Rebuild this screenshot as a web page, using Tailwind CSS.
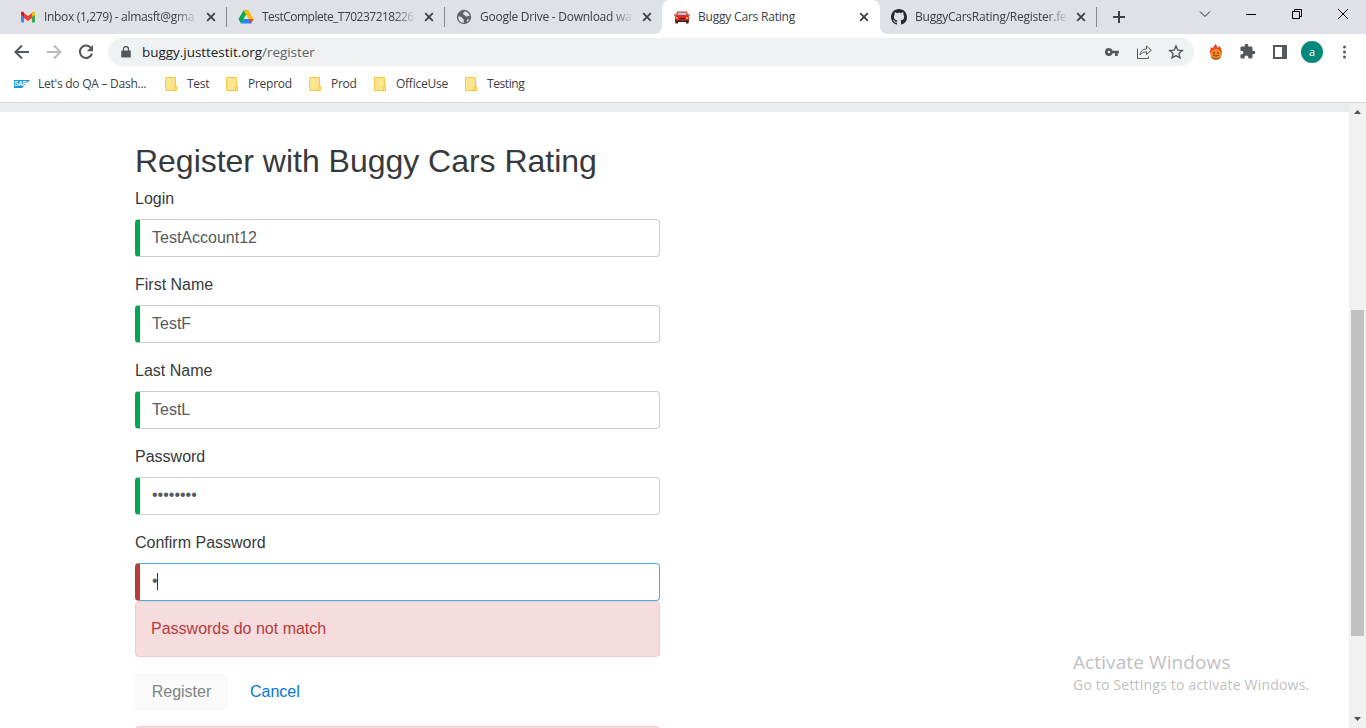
<!DOCTYPE html>
<html lang="en">
<head>
<meta charset="utf-8">
<title>Buggy Cars Rating</title>
<script src="https://cdn.jsdelivr.net/npm/@tailwindcss/browser@4"></script>
</head>
<body class="w-[1366px] h-[728px] overflow-hidden bg-white flex flex-col font-['Open_Sans',sans-serif] text-[12px] text-[#3c4043] relative">
<svg class="hidden">
  <symbol id="x" viewBox="0 0 10 10"><path d="M1.2 1.2 8.8 8.8M8.8 1.2 1.2 8.8" stroke="#3c4043" stroke-width="1.8" fill="none"/></symbol>
  <symbol id="folder" viewBox="0 0 12 14"><path d="M.5.5h10v9h1v4H.5z" fill="#ffe490" stroke="#f7c744"/><path d="M9.5 13v-3.5h2v4h-2z" fill="#ffe490" stroke="#f7c744"/></symbol>
</svg>

<!-- Tab strip -->
<header class="h-[34px] bg-[#dee1e6] flex shrink-0 pl-2 whitespace-nowrap">
  <div class="w-[218px] flex items-center pl-3 shrink-0">
    <svg class="w-4 h-4" viewBox="0 0 16 16"><path d="M1 13V4l3 2v7.500H2z" fill="#4285f4"/><path d="M12 6l3-2v9l-1 .5h-2z" fill="#34a853"/><path d="M4 9V4l4 3 4-3v5l-4 3z" fill="#ea4335"/><path d="M1 4c0-1.600 1.500-2 2.500-1L4 3.500V8L1 6z" fill="#c5221f"/><path d="M15 4c0-1.600-1.500-2-2.500-1l-.5.500V8l3-2z" fill="#fbbc04"/></svg>
    <span class="ml-2 w-[154px] mask-r-from-85% tracking-[-0.33px]">Inbox (1,279) - almasft@gma</span>
    <svg class="w-[10px] h-[10px] ml-[8px]"><use href="#x"/></svg>
    <i class="w-px h-5 bg-[#85888d] ml-auto -mr-px"></i>
  </div>
  <div class="w-[218px] flex items-center pl-3 shrink-0">
    <svg class="w-4 h-4" viewBox="0 0 16 16"><path d="M5.500 1.500h5L8 6 3 14.500.5 10z" fill="#00ac47"/><path d="M5.500 1.500h5l5 8.500h-5z" fill="#ffba00"/><path d="M5.500 10h10L13 14.500H3z" fill="#2684fc"/><path d="M8 6l2.500 4h-5z" fill="#dee1e6"/><path d="M10.500 10h5L13 14.500z" fill="#ea4335"/></svg>
    <span class="ml-2 w-[155px] mask-r-from-85% tracking-[-0.52px]">TestComplete_T70237218226</span>
    <svg class="w-[10px] h-[10px] ml-[7px]"><use href="#x"/></svg>
    <i class="w-px h-5 bg-[#85888d] ml-auto -mr-px"></i>
  </div>
  <div class="w-[218px] flex items-center pl-3 shrink-0">
    <svg class="w-4 h-4" viewBox="0 0 16 16"><circle cx="8" cy="8" r="7.200" fill="#5f6368"/><path d="M2.200 7.500c2 0 3.500.2 4 1.500.4 1 1.600.8 1.600 2v2.800C4.500 13.700 2 11 2.200 7.500zM8.500 2.200c0 1.500-1.500 1-1.500 2.300S8.500 5.500 9 6.500s1.500 1.200 2.500.8 1.500-.6 2.300 0C13.500 4.500 11 2.500 8.500 2.200zM11 10.500c1 0 1.500-.5 2.300-.3-.5 1.300-1.300 2.200-2.300 2.800z" fill="#dee1e6"/></svg>
    <span class="ml-2 w-[154px] mask-r-from-85% tracking-[-0.25px]">Google Drive - Download wa</span>
    <svg class="w-[10px] h-[10px] ml-[8px]"><use href="#x"/></svg>
  </div>
  <div class="w-[218px] bg-white rounded-t-lg flex items-center pl-3 shrink-0 relative">
    <svg class="w-2 h-2 absolute -left-2 bottom-0" viewBox="0 0 8 8"><path d="M8 0v8H0c4.500 0 8-3.500 8-8z" fill="#fff"/></svg>
    <svg class="w-2 h-2 absolute -right-2 bottom-0" viewBox="0 0 8 8"><path d="M0 0v8h8C3.500 8 0 4.500 0 0z" fill="#fff"/></svg>
    <svg class="w-4 h-4" viewBox="0 0 16 16"><path d="M3.200 2.500h9.600l1.500 4h-12.600z" fill="#d3281b"/><path d="M4 3.500h8l1 3H3z" fill="#a9cbe0"/><path d="M0 5.500h2v1H0zM14 5.500h2v1h-2z" fill="#a11"/><path d="M1 7.500 2.500 6h11L15 7.500V12H1z" fill="#e8281c"/><path d="M1 11.500h14V13H1zM1.500 13H4v1.500H1.500zM12 13h2.500v1.500H12zM5 9h6v1.200H5z" fill="#35211f"/><path d="M2 8.300h2v1.200H2zM12 8.300h2v1.200h-2z" fill="#ffd36b"/></svg>
    <span class="ml-2 w-[153px] tracking-[-0.2px]">Buggy Cars Rating</span>
    <svg class="w-[10px] h-[10px] ml-[8px]"><use href="#x"/></svg>
  </div>
  <div class="w-[217px] flex items-center pl-[11px] shrink-0">
    <svg class="w-4 h-4" viewBox="0 0 16 16"><path fill="#24292f" d="M8 0C3.580 0 0 3.580 0 8c0 3.540 2.290 6.530 5.470 7.590.4.070.55-.17.55-.38 0-.19-.01-.82-.01-1.490-2.010.37-2.530-.49-2.690-.94-.09-.23-.48-.94-.82-1.130-.28-.15-.68-.52-.01-.53.63-.01 1.080.58 1.230.82.72 1.210 1.870.87 2.330.66.07-.52.28-.87.51-1.070-1.780-.2-3.640-.89-3.640-3.950 0-.87.31-1.590.82-2.150-.08-.2-.36-1.020.08-2.120 0 0 .67-.21 2.200.82.64-.18 1.320-.27 2-.27s1.360.09 2 .27c1.530-1.040 2.200-.82 2.200-.82.44 1.100.16 1.920.08 2.120.51.56.82 1.270.82 2.150 0 3.070-1.870 3.750-3.650 3.950.29.25.54.73.54 1.480 0 1.070-.01 1.930-.01 2.200 0 .21.15.46.55.38A8.010 8.010 0 0 0 16 8c0-4.420-3.580-8-8-8z"/></svg>
    <span class="ml-2 w-[154px] mask-r-from-85% tracking-[-0.24px]">BuggyCarsRating/Register.fea</span>
    <svg class="w-[10px] h-[10px] ml-[7px]"><use href="#x"/></svg>
    <i class="w-px h-5 bg-[#85888d] ml-auto"></i>
  </div>
  <svg class="w-[14px] h-[14px] ml-[15px] mt-[10px]" viewBox="0 0 14 14"><path d="M7 1v12M1 7h12" stroke="#3c4043" stroke-width="2"/></svg>
  <div class="ml-auto flex pt-[8px] pr-[17px] gap-[35px]">
    <svg class="w-[12px] h-[12px]" viewBox="0 0 12 12"><path d="M1 3.500 6 8.500 11 3.500" stroke="#222" fill="none"/></svg>
    <svg class="w-[10px] h-[12px]" viewBox="0 0 10 12"><path d="M0 6.500h10" stroke="#000"/></svg>
    <svg class="w-[11px] h-[12px] ml-px -mr-px" viewBox="0 0 11 12"><path d="M.5 3.500h7v7h-7zM2.500 3.500v-2h7v7h-2" stroke="#000" fill="none"/></svg>
    <svg class="w-[12px] h-[12px]" viewBox="0 0 12 12"><path d="M1 1l10 10M11 1 1 11" stroke="#000" fill="none"/></svg>
  </div>
</header>

<!-- Toolbar -->
<div class="h-9 flex shrink-0 items-center pl-[14px]">
  <svg class="w-4 h-4" viewBox="0 0 16 16"><path d="M15 8H2M8 1.500 1.500 8 8 14.500" stroke="#54585d" stroke-width="2" fill="none"/></svg>
  <svg class="w-4 h-4 ml-4" viewBox="0 0 16 16"><path d="M1 8h13M8 1.500 14.500 8 8 14.500" stroke="#b9bbbe" stroke-width="2" fill="none"/></svg>
  <svg class="w-4 h-4 ml-4" viewBox="0 0 16 16"><path d="M13.200 4.200A6.200 6.200 0 1 0 14 9.600" stroke="#54585d" stroke-width="2" fill="none"/><path d="M15 1v6.200H8.800z" fill="#54585d"/></svg>
  <div class="ml-[14px] w-[1086px] h-7 rounded-full bg-[#eef2f3] flex items-center pl-[13px] pr-[10px]">
    <svg class="w-[10px] h-[12px]" viewBox="0 0 10 12"><path d="M1 4.500h8a.8.8 0 0 1 .8.800v5.400a.8.8 0 0 1-.8.800H1a.8.8 0 0 1-.8-.8V5.300A.8.8 0 0 1 1 4.500z" fill="#54585d"/><path d="M2.500 5V3a2.500 2.500 0 0 1 5 0v2" stroke="#54585d" stroke-width="1.300" fill="none"/></svg>
    <span class="ml-[11px] pt-px text-[13.500px] text-[#202124] tracking-[-0.04px]">buggy.justtestit.org<span class="text-[#5f6368]">/register</span></span>
    <svg class="w-[14px] h-[8px] ml-auto mr-px mb-px" viewBox="0 0 14 8"><path d="M4 0a4 4 0 1 0 3.700 5.300H10V8h2.700V5.300H14V2.700H7.700A4 4 0 0 0 4 0zm0 5.300a1.300 1.300 0 1 1 0-2.600 1.300 1.300 0 0 1 0 2.600z" fill="#54585d"/></svg>
    <svg class="w-4 h-4 ml-4" viewBox="0 0 16 16"><path d="M1.500 4.500v10H12.500V12.500M4 11C4.500 7 6.500 5.200 10.500 5V2L15.300 6.300 10.500 10.500V7.800C7.500 7.800 5.500 9 4 11z" stroke="#54585d" stroke-width="1" fill="none"/></svg>
    <svg class="w-4 h-4 ml-4" viewBox="0 0 16 16"><path d="M8 2l1.800 4.100 4.500.4-3.400 3 1 4.400L8 11.600 4.100 13.900l1-4.400-3.400-3 4.500-.4z" stroke="#54585d" stroke-width="1.400" fill="none"/></svg>
  </div>
  <svg class="w-[14px] h-4 ml-[15px]" viewBox="0 0 14 16"><path d="M1 9C.5 6 2 5 1.800 3c1 .4 1.500 1 2 1.600C4 3 6 2 6.200 0c1.800 1 2 3 2.300 4C9.500 3.500 10 2.500 11 2c0 2 2.500 4 2 7.500z" fill="#f0391f"/><circle cx="7" cy="10.200" r="5.600" fill="#f8871f"/><path d="M1.700 12a5.600 5.600 0 0 0 10.600 0C10 14.800 4 14.800 1.700 12z" fill="#a85f1c"/><circle cx="5" cy="9" r=".8" fill="#4a1c06"/><circle cx="9" cy="9" r=".8" fill="#4a1c06"/><path d="M4 11.300q3 1.600 6 0" stroke="#6a2c08" stroke-width=".8" fill="none"/></svg>
  <svg class="w-[17px] h-[17px] ml-[16px] mr-px -mt-px" viewBox="0 0 24 24"><path d="M20.500 11H19V7a2 2 0 0 0-2-2h-4V3.500a2.500 2.500 0 0 0-5 0V5H4a2 2 0 0 0-2 2v3.800h1.500a2.700 2.700 0 0 1 0 5.400H2V20a2 2 0 0 0 2 2h3.800v-1.500a2.700 2.700 0 0 1 5.400 0V22H17a2 2 0 0 0 2-2v-4h1.500a2.500 2.500 0 0 0 0-5z" fill="#54585d"/></svg>
  <svg class="w-[14px] h-[14px] ml-4" viewBox="0 0 14 14"><path d="M1 1h12v12H1z" stroke="#54585d" stroke-width="2" fill="none"/><path d="M9 1h4v12H9z" fill="#54585d"/></svg>
  <span class="w-[22px] h-[22px] ml-[14px] rounded-full bg-[#00897b] text-white text-[11px] leading-[21px] text-center">a</span>
  <svg class="w-[4px] h-[14px] ml-[19px]" viewBox="0 0 4 14"><circle cx="2.500" cy="2" r="1.500" fill="#54585d"/><circle cx="2.500" cy="7" r="1.500" fill="#54585d"/><circle cx="2.500" cy="12" r="1.500" fill="#54585d"/></svg>
</div>

<!-- Bookmarks -->
<nav class="h-[33px] border-b border-[#d6d8db] flex shrink-0 items-center pl-[14px] pb-1 whitespace-nowrap tracking-[-0.25px]">
  <svg class="w-4 h-2" viewBox="0 0 16 8"><path d="M0 0h16L8 8H0z" fill="#0f9bdc"/><text x=".3" y="6.300" font-size="7" font-weight="700" font-family="Liberation Sans" textLength="12.500" lengthAdjust="spacingAndGlyphs" fill="#fff">SAP</text></svg>
  <span class="ml-2 w-[127px]">Let's do QA – Dash...</span>
  <svg class="w-3 h-[14px]"><use href="#folder"/></svg><span class="ml-[10px] w-[39px]">Test</span>
  <svg class="w-3 h-[14px]"><use href="#folder"/></svg><span class="ml-[10px] w-[61px]">Preprod</span>
  <svg class="w-3 h-[14px]"><use href="#folder"/></svg><span class="ml-[10px] w-[43px]">Prod</span>
  <svg class="w-3 h-[14px]"><use href="#folder"/></svg><span class="ml-[10px] w-[69px]">OfficeUse</span>
  <svg class="w-3 h-[14px]"><use href="#folder"/></svg><span class="ml-[10px] tracking-[-0.4px]">Testing</span>
</nav>

<!-- Page -->
<div class="flex flex-1 min-h-0">
  <main class="flex-1 overflow-hidden font-['Liberation_Sans',sans-serif] text-base text-[#373a3c]">
    <div class="h-[9px] bg-[#e9eced]"></div>
    <form class="ml-[135px] w-[525px] pt-8">
      <h2 class="text-[32px] leading-[35px] mb-2 whitespace-nowrap tracking-[-0.02px]">Register with Buggy Cars Rating</h2>
      <div class="mb-4"><label class="block mb-2">Login</label>
        <div class="h-[38px] border border-[#ccc] border-l-[5px] border-l-[#00a651] rounded pl-3 leading-[35px] text-[#55595c]">TestAccount12</div></div>
      <div class="mb-4"><label class="block mb-2">First Name</label>
        <div class="h-[38px] border border-[#ccc] border-l-[5px] border-l-[#00a651] rounded pl-3 leading-[35px] text-[#55595c]">TestF</div></div>
      <div class="mb-4"><label class="block mb-2">Last Name</label>
        <div class="h-[38px] border border-[#ccc] border-l-[5px] border-l-[#00a651] rounded pl-3 leading-[35px] text-[#55595c]">TestL</div></div>
      <div class="mb-4"><label class="block mb-2">Password</label>
        <div class="h-[38px] border border-[#ccc] border-l-[5px] border-l-[#00a651] rounded pl-3 leading-[33px] text-[#55595c]">••••••••</div></div>
      <div class="mb-4"><label class="block mb-2">Confirm Password</label>
        <div class="h-[38px] border border-[#45afe3] border-l-[5px] border-l-[#b93a3a] rounded pl-3 leading-[33px] text-[#55595c] flex items-start"><span class="w-[5px]">•</span><i class="w-px h-[17px] mt-[9px] bg-[#333]"></i></div>
        <div class="h-14 border border-[#f1c8cb] bg-[#f7dcde] rounded px-[15px] leading-[53px] text-[#b53a3c]">Passwords do not match</div></div>
      <div class="flex h-[38px] leading-[37px] mb-[15px]">
        <span class="w-[93px] rounded bg-[#fafafa] text-[#818384] text-center">Register</span>
        <a class="ml-[22px] text-[#0275d8]">Cancel</a>
      </div>
      <div class="h-14 border border-[#f1c8cb] bg-[#f7dcde] rounded"></div>
    </form>
  </main>
  <aside class="w-[17px] bg-[#f1f1f1] flex flex-col items-center pt-[7px] pb-[7px]">
    <svg class="w-[7px] h-[4px]" viewBox="0 0 7 4"><path d="M0 4 3.500 0 7 4z" fill="#505050"/></svg>
    <div class="w-[13px] h-[326px] bg-[#c1c1c1] mt-[196px] -ml-px"></div>
    <svg class="w-[7px] h-[4px] mt-auto" viewBox="0 0 7 4"><path d="M0 0 3.500 4 7 0z" fill="#505050"/></svg>
  </aside>
</div>

<!-- System watermark -->
<div class="absolute left-[1073px] top-[650px] text-[#bfbfbf] whitespace-nowrap">
  <div class="text-[19px] leading-6 tracking-[0.1px]">Activate Windows</div>
  <div class="text-[14px] leading-[22px] tracking-[0.2px]">Go to Settings to activate Windows.</div>
</div>
</body>
</html>
